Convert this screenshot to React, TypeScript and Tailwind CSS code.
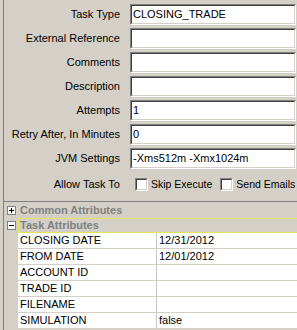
import React from 'react';

const fields = [
  { label: 'Task Type', value: 'CLOSING_TRADE' },
  { label: 'External Reference', value: '' },
  { label: 'Comments', value: '' },
  { label: 'Description', value: '' },
  { label: 'Attempts', value: '1' },
  { label: 'Retry After, In Minutes', value: '0' },
  { label: 'JVM Settings', value: '-Xms512m -Xmx1024m' },
];

const attrs = [
  { name: 'CLOSING DATE', value: '12/31/2012' },
  { name: 'FROM DATE', value: '12/01/2012' },
  { name: 'ACCOUNT ID', value: '' },
  { name: 'TRADE ID', value: '' },
  { name: 'FILENAME', value: '' },
  { name: 'SIMULATION', value: 'false' },
];

function Sunken({ className, children }: { className?: string; children?: React.ReactNode }) {
  // classic win32 sunken edge: dark outer/inner on top-left, light on bottom-right
  return (
    <div className={`border border-t-[#808080] border-l-[#808080] border-b-white border-r-white ${className ?? ''}`}>
      <div className="h-full border border-t-[#404040] border-l-[#404040] border-b-[#d4d0c8] border-r-[#d4d0c8] bg-white">
        {children}
      </div>
    </div>
  );
}

function Check({ label }: { label: string }) {
  return (
    <div className="flex items-center gap-[3px] shrink-0 whitespace-nowrap">
      <Sunken className="w-[13px] h-[13px] shrink-0" />
      <span className="text-[10.5px]">{label}</span>
    </div>
  );
}

function TreeBox({ open }: { open: boolean }) {
  return (
    <div className="relative w-[9px] h-[9px] border border-[#808080] bg-white ml-[3px]">
      <div className="absolute left-[1px] top-[3px] w-[5px] h-[1px] bg-black" />
      {!open && <div className="absolute left-[3px] top-[1px] w-[1px] h-[5px] bg-black" />}
    </div>
  );
}

export default function App() {
  return (
    <div className="w-[297px] h-[330px] overflow-hidden bg-[#d4d0c8] font-['Liberation_Sans',Arial,sans-serif] text-[11px] text-black leading-none">
      <div className="ml-[3px] h-full border-l border-[#808080]">
        {/* form */}
        <div className="grid grid-cols-[116px_166px] gap-x-[10px] gap-y-[3px] pt-[4px]">
          {fields.map((f) => (
            <React.Fragment key={f.label}>
              <div className="flex items-center justify-end h-[21px] whitespace-nowrap">{f.label}</div>
              <Sunken className="h-[21px]">
                <div className="flex items-center h-full pl-[1px]">{f.value}</div>
              </Sunken>
            </React.Fragment>
          ))}
          <div className="flex items-center justify-end h-[24px]">Allow Task To</div>
          <div className="flex items-center gap-[8px] pl-[5px] h-[24px]">
            <Check label="Skip Execute" />
            <Check label="Send Emails" />
          </div>
        </div>

        {/* property grid */}
        <div className="mt-[5px] border-t border-[#808080]">
          <div className="flex items-center h-[16px]">
            <div className="w-[14px] flex items-center">
              <TreeBox open={false} />
            </div>
            <span className="pl-[2px] font-bold text-[#808080]">Common Attributes</span>
          </div>
          <div className="flex items-center h-[15px]">
            <div className="w-[14px] flex items-center">
              <TreeBox open />
            </div>
            <div className="flex-1 h-full flex items-center border border-[#e4e45e] border-r-0 pl-[1px] font-bold text-[#808080]">
              Task Attributes
            </div>
          </div>
          <div className="ml-[14px] bg-white">
            {attrs.map((a) => (
              <div key={a.name} className="flex h-[16px] border-b border-[#d4d0c8]">
                <div className="w-[138px] flex items-center pl-[2px]">{a.name}</div>
                <div className="flex-1 flex items-center pl-[2px] border-l border-[#c8c8c8]">{a.value}</div>
              </div>
            ))}
          </div>
        </div>
      </div>
    </div>
  );
}
